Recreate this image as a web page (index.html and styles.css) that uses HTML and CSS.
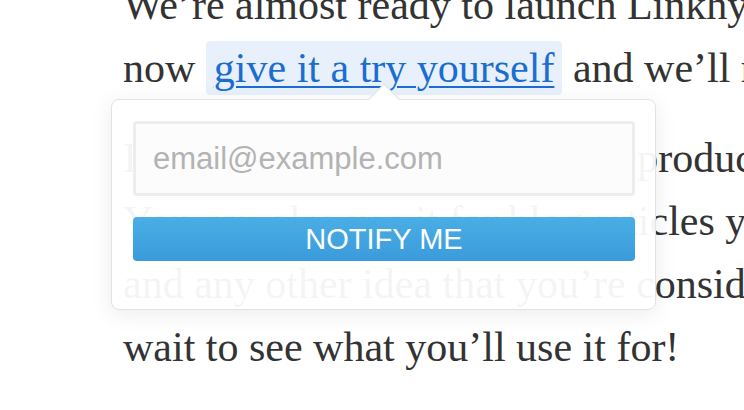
FILE: index.html
```html
<!DOCTYPE html>
<html lang="en">
<head>
  <meta charset="UTF-8" />
  <meta name="viewport" content="width=device-width, initial-scale=1.0"/>
  <title>Linkhype – Early access</title>
  <link rel="stylesheet" href="styles.css">
</head>
<body>
  <main class="article">
    <p class="intro">
      We’re almost ready to launch Linkhype to everyone, but<br>
      now <span class="try"><a href="#" class="try-link">give it a try yourself</a></span> and we’ll notify you when it’s live.
    </p>
    <p>
      It’s a perfect fit for your latest product<br>
      You can also use it for blog articles you<br>
      and any other idea that you’re considering. We can’t<br>
      wait to see what you’ll use it for!
    </p>
  </main>

  <div class="popover">
    <input type="email" class="email" placeholder="email@example.com" />
    <button class="notify">NOTIFY ME</button>
  </div>
</body>
</html>
```

FILE: styles.css
```css
body {
  margin: 0;
  background: #ffffff;
  overflow: hidden;
  font-family: 'Liberation Serif', serif;
  color: #333333;
}

.article {
  padding-left: 123px;
}

.article p {
  margin: 0 0 27px;
  font-size: 42px;
  line-height: 63px;
  white-space: nowrap;
}

.article .intro {
  margin-top: -26px;
}

.try {
  background: #e8f1fb;
  border-radius: 4px;
  padding: 4px 8px;
}

.try-link {
  color: #1b6ed0;
  text-decoration: underline;
  text-decoration-thickness: 2px;
  text-underline-offset: 4px;
}

.popover {
  position: absolute;
  left: 111px;
  top: 99px;
  width: 545px;
  height: 211px;
  box-sizing: border-box;
  padding: 21px 20px 0 21px;
  background: rgba(255, 255, 255, 0.95);
  border: 1px solid #e2e2e2;
  border-radius: 8px;
  box-shadow: 0 4px 22px rgba(0, 0, 0, 0.08);
  display: flex;
  flex-direction: column;
  gap: 21px;
}

.popover::before {
  content: "";
  position: absolute;
  top: -12px;
  left: 261px;
  width: 21px;
  height: 21px;
  background: #ffffff;
  border-top: 1px solid #e2e2e2;
  border-left: 1px solid #e2e2e2;
  transform: rotate(45deg);
}

.email {
  height: 75px;
  box-sizing: border-box;
  border: 3px solid #ededed;
  border-radius: 4px;
  background: #fcfcfc;
  padding: 0 17px;
  font-family: 'Liberation Sans', Arial, sans-serif;
  font-size: 31px;
  color: #333333;
  outline: none;
}

.email::placeholder {
  color: #b3b3b3;
}

.notify {
  height: 44px;
  border: none;
  border-radius: 4px;
  background: linear-gradient(#4aaee5, #3a9bdb);
  color: #ffffff;
  font-family: 'Liberation Sans', Arial, sans-serif;
  font-size: 29px;
  cursor: pointer;
  padding: 0;
}
```
